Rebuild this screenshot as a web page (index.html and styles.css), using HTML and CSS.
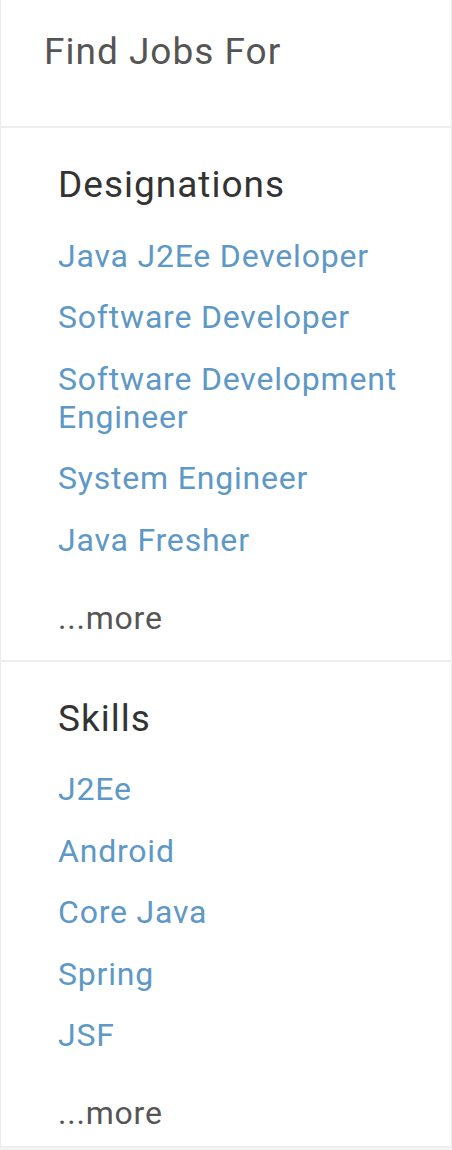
FILE: index.html
```html
<!DOCTYPE html>
<html>
<head>
<meta charset="utf-8">
<link rel="stylesheet" href="styles.css">
</head>
<body>
<div class="card">
  <div class="head">Find Jobs For</div>
  <div class="section">
    <div class="sec-title">Designations</div>
    <ul class="links">
      <li><a href="#">Java J2Ee Developer</a></li>
      <li><a href="#">Software Developer</a></li>
      <li><a href="#">Software Development Engineer</a></li>
      <li><a href="#">System Engineer</a></li>
      <li><a href="#">Java Fresher</a></li>
    </ul>
    <a class="more" href="#">...more</a>
  </div>
  <div class="section">
    <div class="sec-title">Skills</div>
    <ul class="links">
      <li><a href="#">J2Ee</a></li>
      <li><a href="#">Android</a></li>
      <li><a href="#">Core Java</a></li>
      <li><a href="#">Spring</a></li>
      <li><a href="#">JSF</a></li>
    </ul>
    <a class="more" href="#">...more</a>
  </div>
</div>
</body>
</html>
```
FILE: styles.css
```css
html, body {
  margin: 0;
  padding: 0;
  background: #f4f4f4;
}
body {
  font-family: Roboto, "Noto Sans", sans-serif;
  width: 452px;
}
.card {
  width: 450px;
  background: #fff;
  border: 1px solid #ececec;
  border-top: none;
  border-bottom: none;
}
.head {
  height: 128px;
  box-sizing: border-box;
  padding: 30px 0 0 43px;
  font-size: 37px;
  line-height: 44px;
  letter-spacing: 1px;
  color: #555;
  border-bottom: 2px solid #eeeeee;
}
.section {
  padding: 35px 0 0 57px;
  border-bottom: 2px solid #eeeeee;
  display: flex;
  flex-direction: column;
  align-items: flex-start;
}
.sec-title {
  font-size: 37px;
  line-height: 44px;
  letter-spacing: 1px;
  color: #333;
}
.links {
  list-style: none;
  margin: 0;
  padding: 0;
}
.links li {
  margin-top: 23.5px;
  font-size: 32px;
  line-height: 38px;
  letter-spacing: 0.8px;
}
.links li:first-child {
  margin-top: 29.5px;
}
.links a {
  color: #5e98c6;
  text-decoration: none;
}
.more {
  margin-top: 40px;
  margin-bottom: 23px;
  font-size: 32px;
  line-height: 38px;
  letter-spacing: 0.8px;
  color: #555;
  text-decoration: none;
}
.section:last-child .more {
  margin-bottom: 14px;
}
```
